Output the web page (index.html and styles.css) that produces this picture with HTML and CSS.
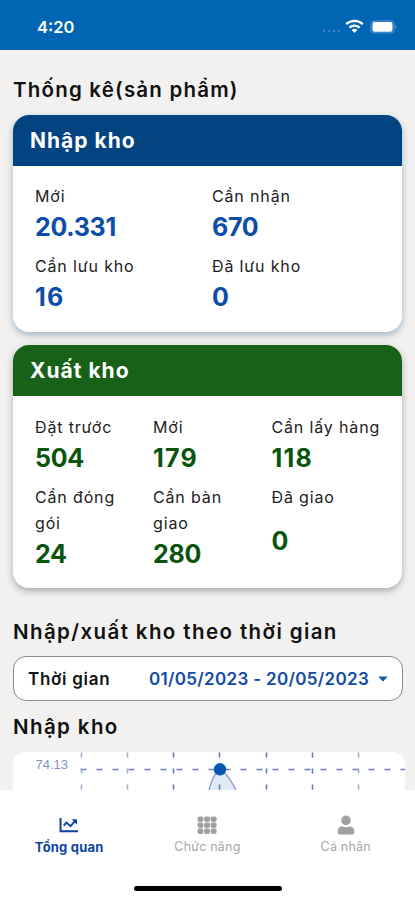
FILE: index.html
```html
<!DOCTYPE html>
<html lang="vi">
<head>
<meta charset="utf-8">
<meta name="viewport" content="width=device-width, initial-scale=1">
<title>Tổng quan</title>
<link rel="stylesheet" href="styles.css">
</head>
<body>
<div class="screen">
  <header class="status">
    <span class="clock">4:20</span>
    <svg class="status-icons" width="76" height="18" viewBox="0 0 76 18">
      <g fill="#3d88ca"><circle cx="3" cy="13" r="1.2"/><circle cx="8" cy="13" r="1.2"/><circle cx="13" cy="13" r="1.2"/><circle cx="18" cy="13" r="1.2"/></g>
      <g fill="none" stroke="#fff" stroke-width="2.3"><path d="M25.2 6.2a12 12 0 0 1 16.6 0"/><path d="M28.4 9.6a7.4 7.4 0 0 1 10.2 0"/></g>
      <path d="M33.5 15l-2.8-3a4 4 0 0 1 5.6 0z" fill="#fff"/>
      <rect x="50" y="2.900" width="23" height="12" rx="3" fill="none" stroke="#5b9bd3"/>
      <rect x="51.500" y="4.100" width="20" height="9.600" rx="1.800" fill="#fff"/>
      <path d="M74.500 7q1.800 1.800 0 3.800z" fill="#8ebbe2"/>
    </svg>
  </header>
  <main class="content">
    <h1 class="title title-stats">Thống kê(sản phẩm)</h1>
    <section class="card card-in">
      <h2 class="card-head">Nhập kho</h2>
      <div class="grid two">
        <div class="stat"><span class="label">Mới</span><b class="value">20.331</b></div>
        <div class="stat"><span class="label">Cần nhận</span><b class="value">670</b></div>
        <div class="stat"><span class="label">Cần lưu kho</span><b class="value ones">16</b></div>
        <div class="stat"><span class="label">Đã lưu kho</span><b class="value">0</b></div>
      </div>
    </section>
    <section class="card card-out">
      <h2 class="card-head">Xuất kho</h2>
      <div class="grid three">
        <div class="stat"><span class="label">Đặt trước</span><b class="value">504</b></div>
        <div class="stat"><span class="label">Mới</span><b class="value ones">179</b></div>
        <div class="stat"><span class="label">Cần lấy hàng</span><b class="value ones">118</b></div>
        <div class="stat"><span class="label">Cần đóng<br>gói</span><b class="value">24</b></div>
        <div class="stat"><span class="label">Cần bàn<br>giao</span><b class="value">280</b></div>
        <div class="stat"><span class="label">Đã giao</span><b class="value">0</b></div>
      </div>
    </section>
    <h1 class="title title-time">Nhập/xuất kho theo thời gian</h1>
    <div class="picker">
      <span class="picker-label">Thời gian</span>
      <span class="picker-range">01/05/2023 - 20/05/2023</span>
      <svg class="caret" width="10" height="6" viewBox="0 0 10 6"><path d="M.3.5h9.400L5.600 4.900q-.6.600-1.200 0z" fill="#1553a8"/></svg>
    </div>
    <h1 class="title title-chart">Nhập kho</h1>
    <div class="chart">
      <svg width="392" height="38" viewBox="13 752 392 38">
        <path d="M209 790Q213 774 220 769Q228 774 236 790Z" fill="#dfeaf7"/>
        <path d="M209 790Q213 774 220 769Q228 774 236 790" fill="none" stroke="#8795c8" stroke-width="1.300"/>
        <path d="M80.500 769.500H405" stroke="#6c80bb" stroke-width="1.300" stroke-dasharray="6 10"/>
        <g stroke-width="1.600" stroke-dasharray="5 11">
          <path d="M81.500 752.500V790M127.500 752.500V790M358.500 752.500V790" stroke="#a0acd0"/>
          <path d="M173.500 752.500V790M219.500 752.500V790M266.500 752.500V790M312.500 752.500V790" stroke="#5f7bb9"/>
        </g>
        <circle cx="220" cy="769.300" r="6.200" fill="#0757b0"/>
        <text class="axis" x="35.500" y="769">74.13</text>
      </svg>
    </div>
  </main>
  <nav class="tabs">
    <div class="tab active">
      <svg width="20" height="20" viewBox="0 0 20 20" fill="none" stroke="#0b45a3" stroke-width="2"><path d="M1.500 3v13.200H19"/><path d="M4.800 10.500l2.700-2.900 4 3.600 4.500-5" stroke-width="1.900"/><path d="M12.700 4.300H18v5.400z" fill="#0b45a3" stroke="none"/></svg>
      <span>Tổng quan</span>
    </div>
    <div class="tab">
      <svg width="20" height="20" viewBox="0 0 20 20" fill="#a0a0a0"><rect x=".5" y="1.500" width="5.900" height="5.400" rx="1.800"/><rect x="7.100" y="1.500" width="5.900" height="5.400" rx="1.800"/><rect x="13.700" y="1.500" width="5.900" height="5.400" rx="1.800"/><rect x=".5" y="7.500" width="5.900" height="5.400" rx="1.800"/><rect x="7.100" y="7.500" width="5.900" height="5.400" rx="1.800"/><rect x="13.700" y="7.500" width="5.900" height="5.400" rx="1.800"/><rect x=".5" y="13.500" width="5.900" height="5.400" rx="1.800"/><rect x="7.100" y="13.500" width="5.900" height="5.400" rx="1.800"/><rect x="13.700" y="13.500" width="5.900" height="5.400" rx="1.800"/></svg>
      <span class="plain">Chức năng</span>
    </div>
    <div class="tab">
      <svg width="20" height="20" viewBox="0 0 20 20" fill="#a0a0a0"><circle cx="10" cy="5.400" r="4.800"/><path d="M1.800 17.500V16q0-4.500 4.500-4.500 3.700 1.500 7.400 0 4.500 0 4.500 4.500v1.500q0 2-2 2H3.800q-2 0-2-2z"/></svg>
      <span class="plain">Cá nhân</span>
    </div>
  </nav>
  <div class="home"></div>
</div>
</body>
</html>
```

FILE: styles.css
```css
* { box-sizing: border-box; margin: 0; }
body { background: #f2f1f0; font-family: Inter, "Open Sans", sans-serif; color: #111; }
.screen { width: 415px; height: 900px; overflow: hidden; display: flex; flex-direction: column; background: #f2f1f0; }
.status { height: 50px; flex: none; background: #0065b3; display: flex; justify-content: space-between; align-items: center; padding: 4px 18px 0 37px; }
.clock { color: #fff; font-size: 16.500px; font-weight: 600; letter-spacing: 0; }
.content { height: 740px; flex: none; overflow: hidden; padding: 0 0 0 13px; }
.title { font-size: 20.500px; line-height: 26px; font-weight: 600; white-space: nowrap; }
.title-stats { margin: 27px 0 12px; letter-spacing: 1.200px; }
.card { width: 389px; border-radius: 16px; overflow: hidden; background: #fff; }
.card-in { height: 217px; box-shadow: 0 3px 7px #9fb5c5; }
.card-out { height: 243px; margin-top: 13px; box-shadow: 0 3px 7px #aaa; }
.card-head { height: 51px; padding-left: 17px; line-height: 52px; font-size: 21px; font-weight: 700; letter-spacing: 1px; color: #fff; }
.card-in .card-head { background: #03437f; }
.card-out .card-head { background: #186118; }
.grid { display: grid; row-gap: 9px; width: 355px; margin: 17px 0 0 22px; }
.card-out .grid { margin-top: 18px; }
.two { grid-template-columns: 177px 178px; }
.three { grid-template-columns: 118px 118.500px 118.500px; }
.stat { display: flex; flex-direction: column; white-space: nowrap; }
.label { font-size: 16px; line-height: 26px; letter-spacing: .85px; color: #222; }
.value { flex: 1; min-height: 35px; display: flex; align-items: center; font-size: 25px; font-weight: 700; letter-spacing: -.3px; }
.ones { letter-spacing: 1.200px; }
.card-in .value { color: #0b4da8; }
.card-out .value { color: #0a540d; }
.title-time { margin: 31px 0 11px; letter-spacing: 1.400px; }
.picker { width: 390px; height: 45px; border: 1px solid #8b8b8b; border-radius: 13px; background: #fff; display: flex; align-items: center; padding: 0 14px 0 14px; font-size: 17px; font-weight: 600; white-space: nowrap; }
.picker-label { width: 121px; letter-spacing: .7px; }
.picker-range { width: 229px; color: #1149a6; letter-spacing: .320px; }
.title-chart { margin: 13px 0 12px; letter-spacing: 1.400px; }
.chart { width: 392px; height: 38px; background: #fff; border-radius: 12px 12px 0 0; overflow: hidden; }
.chart svg { display: block; }
.axis { font: 13px "Liberation Sans", sans-serif; fill: #7f90c5; }
.tabs { height: 90px; flex: none; background: #fff; display: grid; grid-template-columns: repeat(3, 138.300px); padding-top: 25px; }
.tab { display: flex; flex-direction: column; align-items: center; color: #a6a6a6; font-size: 13px; line-height: 18px; letter-spacing: .2px; gap: 3px; }
.plain { font-size: 12.500px; }
.active { color: #0b45a3; font-weight: 700; }
.home { height: 20px; flex: none; background: #fff; }
.home::before { content: ""; display: block; width: 148px; height: 5px; margin: 6px 0 0 134px; border-radius: 3px; background: #000; }
```
